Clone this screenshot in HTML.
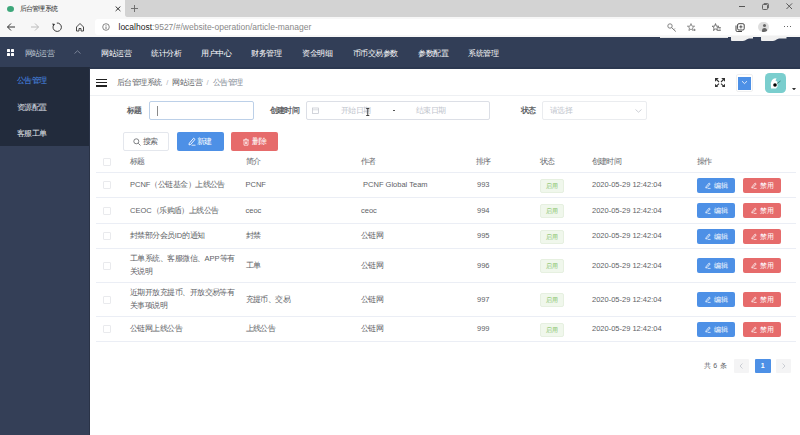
<!DOCTYPE html>
<html><head><meta charset="utf-8">
<style>
*{margin:0;padding:0;box-sizing:border-box}
html,body{width:800px;height:435px;overflow:hidden;background:#fff;font-family:"Liberation Sans",sans-serif;position:relative}
.a{position:absolute;white-space:nowrap}
.t{font-size:7.5px;line-height:10px;letter-spacing:-0.55px}
.L{letter-spacing:0}
/* browser chrome */
#tabbar{left:125px;top:0;width:675px;height:16.5px;background:#d3d3d3;border-radius:0 0 0 2px}
#tab{left:0;top:0;width:125px;height:17px;background:#f7f7f7}
#toolbar{left:0;top:16.5px;width:800px;height:20.5px;background:#f7f7f7}
#addr{left:94.5px;top:18.5px;width:705.5px;height:16.5px;background:#fff;border-radius:3px 0 0 3px}
#nav{left:0;top:37px;width:800px;height:32px;background:#323e57}
#navb{left:90px;top:67px;width:710px;height:2px;background:#2c3850}
#side{left:0;top:67px;width:90px;height:368px;background:#343f57}
#content{left:90px;top:69px;width:710px;height:366px;background:#fff}
#sub{left:0;top:67px;width:90px;height:78.5px;background:#222b3c}
#sideedge{left:89px;top:68px;width:1px;height:367px;background:#2a3347}
.nav{color:#fff;top:48.6px;letter-spacing:-0.5px}
.side{color:#e3e7ee;left:17px}
.lbl{color:#606266;font-weight:bold}
.inp{border:1px solid #dcdfe6;border-radius:2px;background:#fff}
.ph{color:#c0c4cc}
.hd{color:#66696e;top:157px}
.cell{color:#606266}
.rb{left:96px;width:700px;height:1px;background:#ebeef5}
.cb{left:103px;width:8px;height:8px;border:1px solid #e9eaed;border-radius:1px;background:#fff}
.tag{left:540px;width:24px;height:14px;background:#f0f7ec;border:1px solid #e6f0e0;border-radius:2px;color:#84c266;font-size:6px;line-height:12px;text-align:center}
.be{left:697px;width:38px;height:15px;background:#4d90e6;border-radius:2px;color:#fff;font-size:6.5px;line-height:15px;text-align:center;letter-spacing:-0.4px}
.bd{left:743px;width:38px;height:15px;background:#e66b6b;border-radius:2px;color:#fff;font-size:6.5px;line-height:15px;text-align:center;letter-spacing:-0.4px}
.j{display:inline-block;text-align:justify;text-align-last:justify;letter-spacing:-2px;white-space:nowrap;vertical-align:baseline}
</style></head><body>
<div class="a" id="tab"></div>
<div class="a" id="tabbar"></div>
<div class="a" style="left:7px;top:6px;width:7px;height:6px;border-radius:50%;background:#3da77a"></div>
<div class="a" style="left:19.5px;top:3.5px;font-size:6.6px;line-height:10px;color:#2a2a2a;letter-spacing:-0.75px"><span class="j" style="width:36.25px;margin-right:1.25px">后台管理系统</span></div>
<svg class="a" style="left:114.5px;top:6px" width="6" height="5.5" viewBox="0 0 6 5.5"><path d="M0.6 0.5L5.4 5M5.4 0.5L0.6 5" stroke="#222" stroke-width="0.9"></path></svg>
<svg class="a" style="left:130.5px;top:5px" width="7" height="7" viewBox="0 0 7 7"><path d="M3.5 0V7M0 3.5H7" stroke="#666" stroke-width="0.9"></path></svg>
<div class="a" style="left:739px;top:5.5px;width:6px;height:0.9px;background:#555"></div>
<svg class="a" style="left:762px;top:2.5px" width="7" height="7" viewBox="0 0 7 7"><rect x="0.5" y="1.5" width="5" height="5" rx="0.8" fill="none" stroke="#555" stroke-width="0.9"></rect><path d="M1.8 0.5H5.5A1 1 0 0 1 6.5 1.5V5.2" fill="none" stroke="#555" stroke-width="0.8"></path></svg>
<svg class="a" style="left:786px;top:2.8px" width="6.5" height="6.5" viewBox="0 0 6.5 6.5"><path d="M0.4 0.4L6.1 6.1M6.1 0.4L0.4 6.1" stroke="#444" stroke-width="0.85"></path></svg>

<div class="a" id="toolbar"></div>
<div class="a" id="addr"></div>
<!-- back -->
<svg class="a" style="left:6px;top:22px" width="10" height="10" viewBox="0 0 10 10"><path d="M9 5H1.5M5 1.5L1.5 5 5 8.5" fill="none" stroke="#333" stroke-width="1"></path></svg>
<svg class="a" style="left:30px;top:22px" width="10" height="10" viewBox="0 0 10 10"><path d="M1 5H8.5M5 1.5L8.5 5 5 8.5" fill="none" stroke="#bbb" stroke-width="1"></path></svg>
<svg class="a" style="left:52px;top:22px" width="10.5" height="10.5" viewBox="0 0 10.5 10.5"><path d="M4.83 1.02A4.2 4.2 0 1 1 1.56 3.10" fill="none" stroke="#333" stroke-width="0.95"></path><path d="M0.16 1.50L3.16 2.10 1.36 4.30Z" fill="#333"></path></svg>
<svg class="a" style="left:75px;top:22px" width="10" height="10" viewBox="0 0 10 10"><path d="M1.5 5L5 1.5 8.5 5V9H6V6.5H4V9H1.5Z" fill="none" stroke="#333" stroke-width="0.9"></path></svg>
<svg class="a" style="left:102px;top:23px" width="8" height="8" viewBox="0 0 8 8"><circle cx="4" cy="4" r="3.3" fill="none" stroke="#555" stroke-width="0.7"></circle><path d="M4 3.5V6M4 2V2.7" stroke="#555" stroke-width="0.8"></path></svg>
<div class="a" style="left:118.5px;top:22px;font-size:8.5px;line-height:11px;color:#888"><span style="color:#222">localhost</span>:9527/#/website-operation/article-manager</div>
<!-- right toolbar icons -->
<svg class="a" style="left:666.5px;top:22.5px" width="10" height="9" viewBox="0 0 10 9"><circle cx="3" cy="3" r="2.2" fill="none" stroke="#777" stroke-width="0.9"></circle><path d="M4.5 4.5L8.8 8.5M6.8 6.6L7.8 5.6" stroke="#777" stroke-width="1"></path></svg>
<svg class="a" style="left:686.5px;top:22.8px" width="9" height="8.5" viewBox="0 0 9 8.5"><path d="M4 0.6L5 3.2H7.6L5.5 4.8 6.1 7.5 4 6 1.9 7.5 2.5 4.8 0.4 3.2H3Z" fill="none" stroke="#777" stroke-width="0.8"></path><path d="M7.5 5.8V8.3M6.3 7H8.7" stroke="#777" stroke-width="0.8"></path></svg>
<svg class="a" style="left:712px;top:22.8px" width="9" height="8.5" viewBox="0 0 9 8.5"><path d="M3.5 0.6L4.4 3.2H6.8L4.9 4.8 5.5 7.5 3.5 6 1.5 7.5 2.1 4.8 0.2 3.2H2.6Z" fill="none" stroke="#555" stroke-width="0.8"></path><path d="M6 4.5H8.8M6.5 6H8.8M6 7.5H8.8" stroke="#555" stroke-width="0.7"></path></svg>
<svg class="a" style="left:734.5px;top:22.5px" width="10.5" height="9" viewBox="0 0 10.5 9"><path d="M1 2.5V7.3A1.2 1.2 0 0 0 2.2 8.5H7" fill="none" stroke="#333" stroke-width="0.9"></path><rect x="2.6" y="0.7" width="6.6" height="6.3" rx="1.3" fill="none" stroke="#333" stroke-width="0.9"></rect><path d="M5.9 2.2V5.5M4.3 3.85H7.5" stroke="#333" stroke-width="0.8"></path></svg>
<div class="a" style="left:758px;top:21.5px;width:10.5px;height:10.5px;border-radius:50%;background:#dedede;overflow:hidden"><div class="a" style="left:4.5px;top:2px;width:3.5px;height:3.5px;border-radius:50%;background:#666"></div><div class="a" style="left:4px;top:6px;width:5px;height:5px;border-radius:50% 50% 0 0;background:#666"></div></div>
<div class="a" style="left:784px;top:26.2px;width:1.3px;height:1.3px;background:#666"></div>
<div class="a" style="left:787px;top:26.2px;width:1.3px;height:1.3px;background:#666"></div>
<div class="a" style="left:790px;top:26.2px;width:1.3px;height:1.3px;background:#666"></div>

<!-- navbar -->
<div class="a" id="nav"></div>
<div class="a" style="left:7px;top:49px;width:3px;height:3px;background:#fff;border-radius:0.6px"></div>
<div class="a" style="left:11px;top:49px;width:3px;height:3px;background:#fff;border-radius:0.6px"></div>
<div class="a" style="left:7px;top:53px;width:3px;height:3px;background:#fff;border-radius:0.6px"></div>
<div class="a" style="left:11px;top:53px;width:3px;height:3px;background:#fff;border-radius:0.6px"></div>
<div class="a t" style="left:24.5px;top:48.6px;color:#bfc7d3"><span class="j" style="width:28.36px;margin-right:1.45px">网站运营</span></div>
<svg class="a" style="left:74px;top:50px" width="7" height="4" viewBox="0 0 7 4"><path d="M0.5 3.5L3.5 0.8 6.5 3.5" fill="none" stroke="#8a93a6" stroke-width="0.8"></path></svg>
<div class="a t nav" style="left:101px"><span class="j" style="width:28.50px;margin-right:1.50px">网站运营</span></div>
<div class="a t nav" style="left:151px"><span class="j" style="width:28.50px;margin-right:1.50px">统计分析</span></div>
<div class="a t nav" style="left:201px"><span class="j" style="width:28.50px;margin-right:1.50px">用户中心</span></div>
<div class="a t nav" style="left:251px"><span class="j" style="width:28.50px;margin-right:1.50px">财务管理</span></div>
<div class="a t nav" style="left:302px"><span class="j" style="width:28.50px;margin-right:1.50px">资金明细</span></div>
<div class="a t nav" style="left:352.5px"><span class="j" style="width:43.50px;margin-right:1.50px">币币交易参数</span></div>
<div class="a t nav" style="left:418px"><span class="j" style="width:28.50px;margin-right:1.50px">参数配置</span></div>
<div class="a t nav" style="left:468px"><span class="j" style="width:28.50px;margin-right:1.50px">系统管理</span></div>

<!-- watermark -->
<div class="a" style="left:660px;top:37px;width:68px;height:1.3px;background:#f4f4f4;opacity:0.9"></div>
<svg class="a" style="left:728px;top:36px" width="62" height="7" viewBox="0 0 62 7"><path d="M3 0V4.3Q3 5 4 5H15Q17 5 19 3.2L21 2.6H25V0Z" fill="#f0f0f0"></path><path d="M33 0V4.3Q33 5 34 5H45Q47 5 49 3.2L51 2.6H58.5V0Z" fill="#f0f0f0"></path></svg>

<!-- sidebar -->
<div class="a" id="side"></div>
<div class="a" id="sub"></div>
<div class="a" id="sideedge"></div>
<div class="a" id="navb"></div>
<div class="a" id="content"></div>
<div class="a t side" style="top:75.8px;color:#4a8ef0"><span class="j" style="width:28.36px;margin-right:1.45px">公告管理</span></div>
<div class="a t side" style="top:102.8px"><span class="j" style="width:28.36px;margin-right:1.45px">资源配置</span></div>
<div class="a t side" style="top:128.8px"><span class="j" style="width:28.36px;margin-right:1.45px">客服工单</span></div>

<!-- header bar -->
<div class="a" style="left:96px;top:78.5px;width:11px;height:1.6px;background:#222"></div>
<div class="a" style="left:96px;top:81.8px;width:11px;height:1.6px;background:#222"></div>
<div class="a" style="left:96px;top:85px;width:11px;height:1.6px;background:#222"></div>
<div class="a t" style="left:117px;top:78px;color:#606266"><span class="j" style="width:43.25px;margin-right:1.45px">后台管理系统</span></div>
<div class="a t L" style="left:166.2px;top:78px;color:#b0b4bc">/</div>
<div class="a t" style="left:172.3px;top:78px;color:#606266"><span class="j" style="width:28.36px;margin-right:1.45px">网站运营</span></div>
<div class="a t L" style="left:206.6px;top:78px;color:#b0b4bc">/</div>
<div class="a t" style="left:212.7px;top:78px;color:#7d8591"><span class="j" style="width:28.36px;margin-right:1.45px">公告管理</span></div>
<svg class="a" style="left:714.5px;top:77.8px" width="10" height="9.6" viewBox="0 0 10 9.6"><path d="M0 0H3.8L0 3.8ZM10 0V3.8L6.2 0ZM0 9.6V5.8L3.8 9.6ZM10 9.6H6.2L10 5.8Z" fill="#333"></path><path d="M1.2 1.2L4 4M8.8 1.2L6 4M1.2 8.4L4 5.6M8.8 8.4L6 5.6" stroke="#333" stroke-width="1.1"></path></svg>
<div class="a" style="left:735.5px;top:73.5px;width:17px;height:18.5px;border:1px solid #f0f0f0;border-radius:2px"></div>
<div class="a" style="left:738px;top:76.5px;width:13px;height:13px;background:#4d90e6"></div>
<svg class="a" style="left:741px;top:80px" width="7" height="5" viewBox="0 0 7 5"><path d="M1 1.2L3.5 3.6 6 1.2" fill="none" stroke="#fff" stroke-width="0.8"></path></svg>
<div class="a" style="left:765.3px;top:72.7px;width:21px;height:20.3px;background:#7acece;border-radius:4.5px"></div>
<svg class="a" style="left:769px;top:77px" width="13" height="13" viewBox="0 0 13 13"><path d="M2 11.5L1.8 6 3 3 5 1.5 7.5 1.3 6.5 3.5 8.5 5 8.5 9.5 7 11.5Z" fill="#fff"></path><circle cx="6" cy="8" r="1.8" fill="#000"></circle><path d="M8 6.5L11.5 4" stroke="#2a6f6a" stroke-width="0.8"></path></svg>
<svg class="a" style="left:791.5px;top:87.5px" width="4" height="2.5" viewBox="0 0 4 2.5"><path d="M0 0H4L2 2.5Z" fill="#333"></path></svg>
<div class="a" style="left:90px;top:95px;width:710px;height:1px;background:#eef0f3"></div>

<!-- filter form -->
<div class="a t lbl" style="left:127px;top:105.5px"><span class="j" style="width:13.46px;margin-right:1.45px">标题</span></div>
<div class="a inp" style="left:149px;top:101px;width:105px;height:19px;border-color:#bcd0e8"></div>
<div class="a" style="left:157px;top:105.5px;width:1px;height:10px;background:#8a8a8a"></div>
<div class="a t lbl" style="left:269.5px;top:105.5px"><span class="j" style="width:28.36px;margin-right:1.45px">创建时间</span></div>
<div class="a inp" style="left:305.5px;top:101px;width:184px;height:19px"></div>
<svg class="a" style="left:312px;top:107px" width="7" height="7" viewBox="0 0 7 7"><rect x="0.5" y="1" width="6" height="5.5" fill="none" stroke="#c0c4cc" stroke-width="0.7"></rect><path d="M0.5 2.8H6.5" stroke="#c0c4cc" stroke-width="0.6"></path></svg>
<div class="a t ph" style="left:341px;top:105.5px"><span class="j" style="width:28.36px;margin-right:1.45px">开始日期</span></div>
<div class="a" style="left:393px;top:110px;width:2px;height:1.2px;background:#555"></div>
<svg class="a" style="left:366px;top:107.5px" width="3.5" height="8" viewBox="0 0 3.5 8"><path d="M0.2 0.5H3.3M1.75 0.5V7.5M0.2 7.5H3.3" fill="none" stroke="#333" stroke-width="0.9"></path></svg>
<div class="a t ph" style="left:416px;top:105.5px"><span class="j" style="width:28.36px;margin-right:1.45px">结束日期</span></div>
<div class="a t lbl" style="left:520.5px;top:105.5px"><span class="j" style="width:13.46px;margin-right:1.45px">状态</span></div>
<div class="a inp" style="left:541.5px;top:101px;width:105px;height:19px;border-color:#eaecef"></div>
<div class="a t ph" style="left:550px;top:105.5px"><span class="j" style="width:20.91px;margin-right:1.45px">请选择</span></div>
<svg class="a" style="left:634.5px;top:108.5px" width="7" height="4" viewBox="0 0 7 4"><path d="M0.5 0.5L3.5 3.2 6.5 0.5" fill="none" stroke="#c0c4cc" stroke-width="0.8"></path></svg>

<!-- buttons -->
<div class="a inp" style="left:122.5px;top:132px;width:46px;height:19px;border-color:#e4e7ed"></div>
<svg class="a" style="left:133px;top:137.5px" width="8" height="8" viewBox="0 0 8 8"><circle cx="3.3" cy="3.3" r="2.5" fill="none" stroke="#606266" stroke-width="0.8"></circle><path d="M5.2 5.2L7.5 7.5" stroke="#606266" stroke-width="0.8"></path></svg>
<div class="a t" style="left:143px;top:136.5px;color:#606266"><span class="j" style="width:13.46px;margin-right:1.45px">搜索</span></div>
<div class="a" style="left:176.5px;top:132px;width:47px;height:19px;background:#4d90e6;border-radius:2px"></div>
<svg class="a" style="left:187.5px;top:137px" width="8" height="9" viewBox="0 0 8 9"><path d="M1.3 6.2L5.6 1.2 7 2.4 2.7 7.4 1 7.9Z" fill="none" stroke="#fff" stroke-width="0.9"></path><path d="M3.5 8.2H7.5" stroke="#fff" stroke-width="0.8"></path></svg>
<div class="a t" style="left:197px;top:136.5px;color:#fff"><span class="j" style="width:13.46px;margin-right:1.45px">新建</span></div>
<div class="a" style="left:231px;top:132px;width:46.5px;height:19px;background:#e66b6b;border-radius:2px"></div>
<svg class="a" style="left:242px;top:137.5px" width="8" height="8" viewBox="0 0 8 8"><path d="M1 2H7M3 2V1H5V2M2 2V7.2H6V2M3.5 3.5V6M4.5 3.5V6" fill="none" stroke="#fff" stroke-width="0.7"></path></svg>
<div class="a t" style="left:252px;top:136.5px;color:#fff"><span class="j" style="width:13.46px;margin-right:1.45px">删除</span></div>

<!-- table header -->
<div class="a cb" style="top:158px"></div>
<div class="a t hd" style="left:129.5px"><span class="j" style="width:13.46px;margin-right:1.45px">标题</span></div>
<div class="a t hd" style="left:245.5px"><span class="j" style="width:13.46px;margin-right:1.45px">简介</span></div>
<div class="a t hd" style="left:361px"><span class="j" style="width:13.46px;margin-right:1.45px">作者</span></div>
<div class="a t hd" style="left:476px"><span class="j" style="width:13.46px;margin-right:1.45px">排序</span></div>
<div class="a t hd" style="left:539.5px"><span class="j" style="width:13.46px;margin-right:1.45px">状态</span></div>
<div class="a t hd" style="left:591.5px"><span class="j" style="width:28.36px;margin-right:1.45px">创建时间</span></div>
<div class="a t hd" style="left:697px"><span class="j" style="width:13.46px;margin-right:1.45px">操作</span></div>
<div class="a rb" style="top:172px"></div>

<!-- rows -->
<!--ROWS-->
<div class="a cb" style="top:181.0px"></div>
<div class="a t cell" style="left:130px;top:180.0px"><span class="L">PCNF</span><span class="j" style="width:73.07px;margin-right:1.45px">（公链基金）上线公告</span></div>
<div class="a t cell L" style="left:245.5px;top:180.0px">PCNF</div>
<div class="a t cell L" style="left:361px;top:180.0px">&nbsp;PCNF Global Team</div>
<div class="a t cell L" style="left:477px;top:180.0px">993</div>
<div class="a tag" style="top:178.5px"><span class="j" style="width:10.00px;margin-right:2.00px">启用</span></div>
<div class="a t cell L" style="left:592px;top:180.0px">2020-05-29 12:42:04</div>
<div class="a be" style="top:177.8px"><svg width="6" height="7" viewBox="0 0 6 7" style="vertical-align:-1px;margin-right:3px"><path d="M1 4.8L4.2 1 5.2 1.9 2 5.7 0.8 6Z" fill="none" stroke="#fff" stroke-width="0.75"></path><path d="M2.6 6.4H5.6" stroke="#fff" stroke-width="0.7"></path></svg><span class="j" style="width:11.60px;margin-right:1.60px">编辑</span></div>
<div class="a bd" style="top:177.8px"><svg width="6" height="7" viewBox="0 0 6 7" style="vertical-align:-1px;margin-right:3px"><path d="M1 4.8L4.2 1 5.2 1.9 2 5.7 0.8 6Z" fill="none" stroke="#fff" stroke-width="0.75"></path><path d="M2.6 6.4H5.6" stroke="#fff" stroke-width="0.7"></path></svg><span class="j" style="width:11.60px;margin-right:1.60px">禁用</span></div>
<div class="a rb" style="top:197.4px"></div>
<div class="a cb" style="top:206.5px"></div>
<div class="a t cell" style="left:130px;top:205.5px"><span class="L">CEOC</span><span class="j" style="width:65.61px;margin-right:1.45px">（乐购盾）上线公告</span></div>
<div class="a t cell L" style="left:245.5px;top:205.5px">ceoc</div>
<div class="a t cell L" style="left:361px;top:205.5px">ceoc</div>
<div class="a t cell L" style="left:477px;top:205.5px">994</div>
<div class="a tag" style="top:204.0px"><span class="j" style="width:10.00px;margin-right:2.00px">启用</span></div>
<div class="a t cell L" style="left:592px;top:205.5px">2020-05-29 12:42:04</div>
<div class="a be" style="top:203.3px"><svg width="6" height="7" viewBox="0 0 6 7" style="vertical-align:-1px;margin-right:3px"><path d="M1 4.8L4.2 1 5.2 1.9 2 5.7 0.8 6Z" fill="none" stroke="#fff" stroke-width="0.75"></path><path d="M2.6 6.4H5.6" stroke="#fff" stroke-width="0.7"></path></svg><span class="j" style="width:11.60px;margin-right:1.60px">编辑</span></div>
<div class="a bd" style="top:203.3px"><svg width="6" height="7" viewBox="0 0 6 7" style="vertical-align:-1px;margin-right:3px"><path d="M1 4.8L4.2 1 5.2 1.9 2 5.7 0.8 6Z" fill="none" stroke="#fff" stroke-width="0.75"></path><path d="M2.6 6.4H5.6" stroke="#fff" stroke-width="0.7"></path></svg><span class="j" style="width:11.60px;margin-right:1.60px">禁用</span></div>
<div class="a rb" style="top:222.7px"></div>
<div class="a cb" style="top:232.0px"></div>
<div class="a t cell" style="left:130px;top:231.0px"><span class="j" style="width:43.25px;margin-right:1.45px">封禁部分会员</span><span class="L">ID</span><span class="j" style="width:20.91px;margin-right:1.45px">的通知</span></div>
<div class="a t cell" style="left:245.5px;top:231.0px"><span class="j" style="width:13.46px;margin-right:1.45px">封禁</span></div>
<div class="a t cell" style="left:361px;top:231.0px"><span class="j" style="width:20.91px;margin-right:1.45px">公链网</span></div>
<div class="a t cell L" style="left:477px;top:231.0px">995</div>
<div class="a tag" style="top:229.5px"><span class="j" style="width:10.00px;margin-right:2.00px">启用</span></div>
<div class="a t cell L" style="left:592px;top:231.0px">2020-05-29 12:42:04</div>
<div class="a be" style="top:228.8px"><svg width="6" height="7" viewBox="0 0 6 7" style="vertical-align:-1px;margin-right:3px"><path d="M1 4.8L4.2 1 5.2 1.9 2 5.7 0.8 6Z" fill="none" stroke="#fff" stroke-width="0.75"></path><path d="M2.6 6.4H5.6" stroke="#fff" stroke-width="0.7"></path></svg><span class="j" style="width:11.60px;margin-right:1.60px">编辑</span></div>
<div class="a bd" style="top:228.8px"><svg width="6" height="7" viewBox="0 0 6 7" style="vertical-align:-1px;margin-right:3px"><path d="M1 4.8L4.2 1 5.2 1.9 2 5.7 0.8 6Z" fill="none" stroke="#fff" stroke-width="0.75"></path><path d="M2.6 6.4H5.6" stroke="#fff" stroke-width="0.7"></path></svg><span class="j" style="width:11.60px;margin-right:1.60px">禁用</span></div>
<div class="a rb" style="top:248.0px"></div>
<div class="a cb" style="top:261.5px"></div>
<div class="a t cell" style="left:130px;top:254.3px"><span class="j" style="width:73.07px;margin-right:1.45px">工单系统、客服微信、</span><span class="L">APP</span><span class="j" style="width:13.46px;margin-right:1.45px">等有</span></div>
<div class="a t cell" style="left:130px;top:266.7px"><span class="j" style="width:20.91px;margin-right:1.45px">关说明</span></div>
<div class="a t cell" style="left:245.5px;top:260.5px"><span class="j" style="width:13.46px;margin-right:1.45px">工单</span></div>
<div class="a t cell" style="left:361px;top:260.5px"><span class="j" style="width:20.91px;margin-right:1.45px">公链网</span></div>
<div class="a t cell L" style="left:477px;top:260.5px">996</div>
<div class="a tag" style="top:259.0px"><span class="j" style="width:10.00px;margin-right:2.00px">启用</span></div>
<div class="a t cell L" style="left:592px;top:260.5px">2020-05-29 12:42:04</div>
<div class="a be" style="top:258.3px"><svg width="6" height="7" viewBox="0 0 6 7" style="vertical-align:-1px;margin-right:3px"><path d="M1 4.8L4.2 1 5.2 1.9 2 5.7 0.8 6Z" fill="none" stroke="#fff" stroke-width="0.75"></path><path d="M2.6 6.4H5.6" stroke="#fff" stroke-width="0.7"></path></svg><span class="j" style="width:11.60px;margin-right:1.60px">编辑</span></div>
<div class="a bd" style="top:258.3px"><svg width="6" height="7" viewBox="0 0 6 7" style="vertical-align:-1px;margin-right:3px"><path d="M1 4.8L4.2 1 5.2 1.9 2 5.7 0.8 6Z" fill="none" stroke="#fff" stroke-width="0.75"></path><path d="M2.6 6.4H5.6" stroke="#fff" stroke-width="0.7"></path></svg><span class="j" style="width:11.60px;margin-right:1.60px">禁用</span></div>
<div class="a rb" style="top:281.9px"></div>
<div class="a cb" style="top:295.6px"></div>
<div class="a t cell" style="left:130px;top:288.4px"><span class="j" style="width:102.86px;margin-right:1.45px">近期开放充提币、开放交易等有</span></div>
<div class="a t cell" style="left:130px;top:300.8px"><span class="j" style="width:35.82px;margin-right:1.45px">关事项说明</span></div>
<div class="a t cell" style="left:245.5px;top:294.6px"><span class="j" style="width:43.25px;margin-right:1.45px">充提币、交易</span></div>
<div class="a t cell" style="left:361px;top:294.6px"><span class="j" style="width:20.91px;margin-right:1.45px">公链网</span></div>
<div class="a t cell L" style="left:477px;top:294.6px">997</div>
<div class="a tag" style="top:293.1px"><span class="j" style="width:10.00px;margin-right:2.00px">启用</span></div>
<div class="a t cell L" style="left:592px;top:294.6px">2020-05-29 12:42:04</div>
<div class="a be" style="top:292.4px"><svg width="6" height="7" viewBox="0 0 6 7" style="vertical-align:-1px;margin-right:3px"><path d="M1 4.8L4.2 1 5.2 1.9 2 5.7 0.8 6Z" fill="none" stroke="#fff" stroke-width="0.75"></path><path d="M2.6 6.4H5.6" stroke="#fff" stroke-width="0.7"></path></svg><span class="j" style="width:11.60px;margin-right:1.60px">编辑</span></div>
<div class="a bd" style="top:292.4px"><svg width="6" height="7" viewBox="0 0 6 7" style="vertical-align:-1px;margin-right:3px"><path d="M1 4.8L4.2 1 5.2 1.9 2 5.7 0.8 6Z" fill="none" stroke="#fff" stroke-width="0.75"></path><path d="M2.6 6.4H5.6" stroke="#fff" stroke-width="0.7"></path></svg><span class="j" style="width:11.60px;margin-right:1.60px">禁用</span></div>
<div class="a rb" style="top:316.1px"></div>
<div class="a cb" style="top:325.3px"></div>
<div class="a t cell" style="left:130px;top:324.3px"><span class="j" style="width:50.71px;margin-right:1.45px">公链网上线公告</span></div>
<div class="a t cell" style="left:245.5px;top:324.3px"><span class="j" style="width:28.36px;margin-right:1.45px">上线公告</span></div>
<div class="a t cell" style="left:361px;top:324.3px"><span class="j" style="width:20.91px;margin-right:1.45px">公链网</span></div>
<div class="a t cell L" style="left:477px;top:324.3px">999</div>
<div class="a tag" style="top:322.8px"><span class="j" style="width:10.00px;margin-right:2.00px">启用</span></div>
<div class="a t cell L" style="left:592px;top:324.3px">2020-05-29 12:42:04</div>
<div class="a be" style="top:322.1px"><svg width="6" height="7" viewBox="0 0 6 7" style="vertical-align:-1px;margin-right:3px"><path d="M1 4.8L4.2 1 5.2 1.9 2 5.7 0.8 6Z" fill="none" stroke="#fff" stroke-width="0.75"></path><path d="M2.6 6.4H5.6" stroke="#fff" stroke-width="0.7"></path></svg><span class="j" style="width:11.60px;margin-right:1.60px">编辑</span></div>
<div class="a bd" style="top:322.1px"><svg width="6" height="7" viewBox="0 0 6 7" style="vertical-align:-1px;margin-right:3px"><path d="M1 4.8L4.2 1 5.2 1.9 2 5.7 0.8 6Z" fill="none" stroke="#fff" stroke-width="0.75"></path><path d="M2.6 6.4H5.6" stroke="#fff" stroke-width="0.7"></path></svg><span class="j" style="width:11.60px;margin-right:1.60px">禁用</span></div>
<div class="a rb" style="top:340.9px"></div>
<div class="a t cell" style="left:704.3px;top:361.3px;font-size:7px"><span class="j" style="width:5.00px;margin-right:1.45px">共</span></div>
<div class="a t cell L" style="left:713.2px;top:361.3px;font-size:7px">6</div>
<div class="a t cell" style="left:719.8px;top:361.3px;font-size:7px"><span class="j" style="width:5.00px;margin-right:1.45px">条</span></div>
<div class="a" style="left:734px;top:359px;width:15px;height:14px;background:#f4f4f5;border-radius:1px"></div>
<svg class="a" style="left:739px;top:363px" width="5" height="6" viewBox="0 0 5 6"><path d="M3.5 0.5L1 3 3.5 5.5" fill="none" stroke="#c0c4cc" stroke-width="0.8"></path></svg>
<div class="a" style="left:755px;top:359px;width:15.5px;height:14px;background:#4d90e6;border-radius:1px;color:#fff;font-size:7px;line-height:14px;text-align:center;font-weight:bold">1</div>
<div class="a" style="left:776px;top:359px;width:15px;height:14px;background:#f4f4f5;border-radius:1px"></div>
<svg class="a" style="left:781px;top:363px" width="5" height="6" viewBox="0 0 5 6"><path d="M1.5 0.5L4 3 1.5 5.5" fill="none" stroke="#c0c4cc" stroke-width="0.8"></path></svg>
<!--/ROWS-->

</body></html>
